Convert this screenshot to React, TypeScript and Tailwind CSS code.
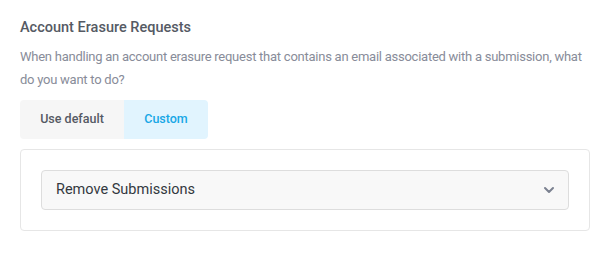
import { ChevronDown } from 'lucide-react';

export default function App() {
    return (
        <div className="w-[610px] h-[253px] bg-white px-5 pt-[18px] [font-family:Roboto]">
            <h3 className="text-[14.5px] leading-5 font-medium text-[#555a64]">Account Erasure Requests</h3>
            <p className="mt-[7px] text-[13px] leading-[23px] tracking-[-0.25px] text-[#888c99]">
                When handling an account erasure request that contains an email associated with a submission, what do you want to do?
            </p>
            <div className="mt-[9px] flex w-fit rounded overflow-hidden text-[12.5px] font-medium">
                <button className="h-[39px] w-[104px] bg-[#f6f6f6] text-[#555a64]">Use default</button>
                <button className="h-[39px] w-[84px] bg-[#e1f4fe] text-[#17a7e6]">Custom</button>
            </div>
            <div className="mt-[10px] w-[570px] rounded border border-[#e6e6e6] p-5">
                <div className="flex h-[40px] items-center justify-between rounded border border-[#dddddd] bg-[#f8f8f8] pl-[14px] pr-[11px]">
                    <span className="text-[14.5px] text-[#333840]">Remove Submissions</span>
                    <ChevronDown className="h-4 w-4 text-[#7b8190]" strokeWidth={3} />
                </div>
            </div>
        </div>
    );
}
